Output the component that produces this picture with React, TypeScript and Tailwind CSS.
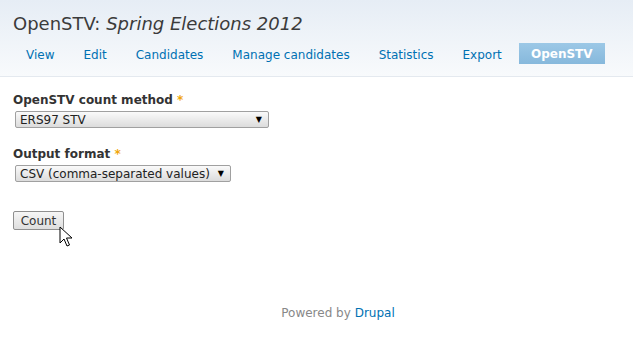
import React from 'react'

const tabs = ['View', 'Edit', 'Candidates', 'Manage candidates', 'Statistics', 'Export']

function Cursor() {
  return (
    <svg
      className="absolute left-[59px] top-[226px]"
      width="14"
      height="22"
      viewBox="0 0 14 22"
    >
      <path
        d="M1 1 L1 17 L5 13 L8 20 L10.5 19 L7.5 12 L13 12 Z"
        fill="#fff"
        stroke="#000"
        strokeWidth="1"
        strokeLinejoin="miter"
      />
    </svg>
  )
}

function FakeSelect({ value, width }: { value: string; width: string }) {
  return (
    <div
      className={`flex h-[17px] items-center justify-between rounded-[2px] border border-[#a0a0a0] bg-gradient-to-b from-[#fafafa] to-[#dcdcdc] pl-[4px] pr-[6px] text-[12px] leading-none text-[#222] ${width}`}
    >
      <span>{value}</span>
      <span className="text-[8px] text-black">▼</span>
    </div>
  )
}

export default function App() {
  return (
    <div className="relative h-[363px] w-[633px] overflow-hidden bg-white font-['DejaVu_Sans',sans-serif]">
      {/* Header */}
      <div className="h-[77px] border-b border-[#e4e9ef] bg-gradient-to-b from-[#e6edf5] to-[#f8fafc] pl-[13px] pt-[12px]">
        <h1 className="text-[18px] leading-[24px] text-[#3b3b3b]">
          OpenSTV: <em>Spring Elections 2012</em>
        </h1>
        <div className="mt-[7px] flex items-center pl-[13px]">
          {tabs.map((t) => (
            <a key={t} className="mr-[29px] pt-[3px] text-[12px] leading-[18px] text-[#0071b3]">
              {t}
            </a>
          ))}
          <span className="-ml-[12px] flex h-[21px] w-[86px] items-center justify-center bg-gradient-to-b from-[#9cc8e6] to-[#86b8dc] pt-[1px] text-[12px] font-bold text-white">
            OpenSTV
          </span>
        </div>
      </div>

      {/* Form */}
      <div className="pl-[13px] pt-[15px]">
        <div className="text-[12px] font-bold leading-[16px] text-[#333]">
          OpenSTV count method <span className="text-[#f0a60a]">*</span>
        </div>
        <div className="mt-[3px] pl-[2px]">
          <FakeSelect value="ERS97 STV" width="w-[254px]" />
        </div>

        <div className="mt-[18px] text-[12px] font-bold leading-[16px] text-[#333]">
          Output format <span className="text-[#f0a60a]">*</span>
        </div>
        <div className="mt-[3px] pl-[2px]">
          <FakeSelect value="CSV (comma-separated values)" width="w-[216px]" />
        </div>

        <button className="mt-[29px] h-[19px] w-[51px] rounded-[2px] border border-[#8f8f8f] bg-gradient-to-b from-[#f6f6f6] to-[#dedede] text-[12px] leading-none text-[#333]">
          Count
        </button>
      </div>

      {/* Footer */}
      <div className="absolute left-0 right-0 top-[305px] pl-[43px] text-center text-[12px] leading-[16px] text-[#888]">
        Powered by <a className="text-[#0071b3]">Drupal</a>
      </div>

      <Cursor />
    </div>
  )
}
